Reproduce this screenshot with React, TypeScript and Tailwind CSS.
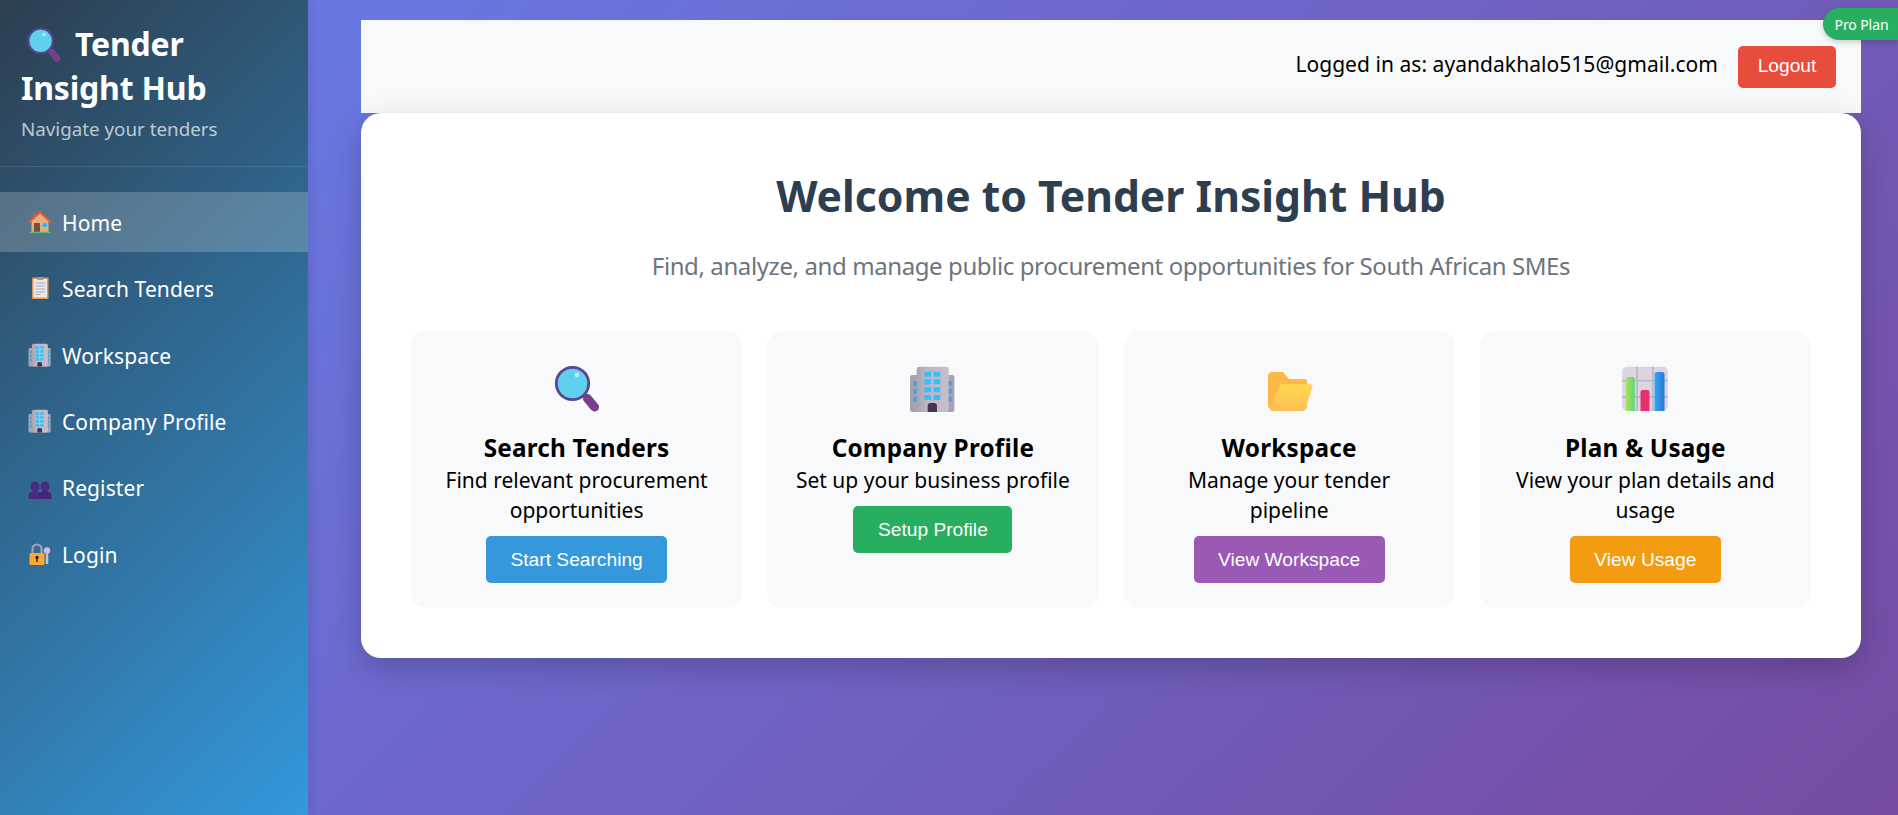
import type { ReactNode } from "react";

const ui = "font-['Noto_Sans',sans-serif]";

type IconProps = { size: number; className?: string };

function Glyph({ size, className, children }: IconProps & { children: ReactNode }) {
  return (
    <svg width={size} height={size} viewBox="0 0 48 48" className={className} aria-hidden="true">
      {children}
    </svg>
  );
}

function Magnifier(props: IconProps) {
  return (
    <Glyph {...props}>
      <line x1="34.5" y1="33.5" x2="41.5" y2="42" stroke="#7a3f8a" strokeWidth="9" strokeLinecap="round" />
      <circle cx="19.5" cy="18.5" r="16.2" fill="#5fd0ee" stroke="#5d4490" strokeWidth="2.8" />
      <circle cx="24" cy="10" r="2.4" fill="#b8e6f6" />
    </Glyph>
  );
}

function Building(props: IconProps) {
  const tower = [6.7, 14.3, 22.3, 30];
  const side = [16, 24, 31.6];
  return (
    <Glyph {...props}>
      <defs>
        <linearGradient id="towerFace" x1="0" y1="0" x2="1" y2="0">
          <stop offset="0" stopColor="#a9a2af" />
          <stop offset="0.3" stopColor="#bdb5c2" />
          <stop offset="1" stopColor="#c6bfcb" />
        </linearGradient>
      </defs>
      <rect x="1" y="10" width="44.4" height="37" rx="2" fill="#a8a2ae" />
      <rect x="7.7" y="1.7" width="32" height="45.3" rx="3" fill="url(#towerFace)" />
      {tower.map((y) => (
        <g key={y} fill="#36c0fb">
          <rect x="15.4" y={y} width="6.6" height="5" />
          <rect x="24.7" y={y} width="6.6" height="5" />
        </g>
      ))}
      {side.map((y) => (
        <g key={y} fill="#36a9ec">
          <rect x="4.4" y={y} width="3.3" height="5" />
          <rect x="39.7" y={y} width="3" height="5" />
        </g>
      ))}
      <path d="M18.7 47v-6a3 3 0 0 1 3-3h3.3a3 3 0 0 1 3 3v6z" fill="#433553" />
    </Glyph>
  );
}

function Folder(props: IconProps) {
  return (
    <Glyph {...props}>
      <defs>
        <linearGradient id="folderFront" x1="0" y1="0" x2="0" y2="1">
          <stop offset="0" stopColor="#ffd84f" />
          <stop offset="1" stopColor="#ffbe55" />
        </linearGradient>
      </defs>
      <path d="M3 11a4 4 0 0 1 4-4h11l6 7h16a2 2 0 0 1 2 2v26a2 2 0 0 1-2 2H7a4 4 0 0 1-4-4z" fill="#ffb845" />
      <path d="M14.500 21.500a3 3 0 0 1 3-2.200h28a2 2 0 0 1 2 2.500L40.500 43.500a3 3 0 0 1-3 2.500H7a2 2 0 0 1-2-2.500z" fill="url(#folderFront)" />
    </Glyph>
  );
}

function BarChart(props: IconProps) {
  return (
    <Glyph {...props}>
      <defs>
        <linearGradient id="barGreen" x1="0" y1="0" x2="1" y2="0">
          <stop offset="0" stopColor="#a5e35c" />
          <stop offset="1" stopColor="#5fd67c" />
        </linearGradient>
        <linearGradient id="barBlue" x1="0" y1="0" x2="1" y2="0">
          <stop offset="0" stopColor="#31a9f5" />
          <stop offset="1" stopColor="#2a75cf" />
        </linearGradient>
      </defs>
      <rect x="1.200" y="1.700" width="45.600" height="44.300" rx="5" fill="#dad5e1" />
      <path d="M16 1.700V46M31.800 1.700V46M1.200 15.700h45.600M1.200 32h45.600" stroke="#bdb8c5" strokeWidth="1.800" />
      <path d="M5 46V14.500a2.500 2.500 0 0 1 2.500-2.500h3.800a2.500 2.500 0 0 1 2.500 2.500V46z" fill="url(#barGreen)" />
      <path d="M19.500 46V27a2 2 0 0 1 2-2h5a2 2 0 0 1 2 2v19z" fill="#e8306f" />
      <path d="M33.500 46V9.500A2.500 2.500 0 0 1 36 7h5a2.500 2.500 0 0 1 2.500 2.500V46z" fill="url(#barBlue)" />
    </Glyph>
  );
}

function House(props: IconProps) {
  return (
    <Glyph {...props}>
      <rect x="10" y="2" width="5" height="12" fill="#a5684a" />
      <path d="M24 6 7 21v23h34V21z" fill="#e4ae7d" />
      <path d="M3 24 24 5l21 19" fill="none" stroke="#ef5c3a" strokeWidth="4" strokeLinejoin="round" strokeLinecap="round" />
      <rect x="12" y="26" width="12" height="18" fill="#7a4f43" />
      <rect x="29" y="26" width="9" height="8" fill="#3fb3f7" />
      <rect x="2" y="43.500" width="44" height="2.500" fill="#54c26a" />
    </Glyph>
  );
}

function Clipboard(props: IconProps) {
  return (
    <Glyph {...props}>
      <rect x="8" y="3" width="33" height="43" rx="1.500" fill="#dc9a50" />
      <rect x="11" y="6" width="27" height="37" fill="#ece7ef" />
      <rect x="18" y="2" width="13" height="6" rx="1.500" fill="#9f99a6" />
      <path d="M15 14h19M15 20h19M15 26h19M15 32h19M15 37h10" stroke="#a7a1ae" strokeWidth="1.800" />
    </Glyph>
  );
}

function People(props: IconProps) {
  return (
    <Glyph {...props}>
      <g fill="#4b2a84">
        <ellipse cx="14" cy="21" rx="9" ry="10" />
        <path d="M1 46v-6c0-6 6-10 13-10s13 4 13 10v6z" />
        <ellipse cx="34" cy="21" rx="9" ry="10" />
        <path d="M21 46v-6c0-6 6-10 13-10s13 4 13 10v6z" fill="#452578" />
      </g>
    </Glyph>
  );
}

function LockKey(props: IconProps) {
  return (
    <Glyph {...props}>
      <path d="M9 24V14a9 9 0 0 1 18 0v10" fill="none" stroke="#aaa3b8" strokeWidth="4" />
      <circle cx="38" cy="17" r="6.500" fill="#c9bedb" />
      <rect x="35.500" y="20" width="5" height="24" rx="1" fill="#c9bedb" />
      <rect x="3" y="22" width="30" height="24" rx="3" fill="#fbaa2c" />
      <circle cx="18" cy="31" r="3.500" fill="#36243f" />
      <rect x="16.500" y="32" width="3" height="8" fill="#36243f" />
    </Glyph>
  );
}

const navItems = [
  { label: "Home", Icon: House, active: true },
  { label: "Search Tenders", Icon: Clipboard },
  { label: "Workspace", Icon: Building },
  { label: "Company Profile", Icon: Building },
  { label: "Register", Icon: People },
  { label: "Login", Icon: LockKey },
];

const cards = [
  { title: "Search Tenders", text: "Find relevant procurement opportunities", action: "Start Searching", color: "bg-[#3498db]", Icon: Magnifier },
  { title: "Company Profile", text: "Set up your business profile", action: "Setup Profile", color: "bg-[#27ae60]", Icon: Building },
  { title: "Workspace", text: "Manage your tender pipeline", action: "View Workspace", color: "bg-[#9b59b6]", Icon: Folder },
  { title: "Plan & Usage", text: "View your plan details and usage", action: "View Usage", color: "bg-[#f39c12]", Icon: BarChart },
];

function Sidebar() {
  return (
    <aside className="w-[308px] shrink-0 bg-linear-[135deg,#2c3e50,#3498db] shadow-[2px_0_10px_rgba(0,0,0,0.1)] text-white">
      <div className="border-b border-white/10 px-[21px] pt-[22px] pb-[24px]">
        <h1 className="text-[32px] leading-[44px] font-bold tracking-[-0.2px]">
          <Magnifier size={36} className="ml-[5px] mr-[13px] inline-block align-[-7px]" />
          Tender Insight Hub
        </h1>
        <p className="mt-[6px] text-[18.800px] leading-[26px] text-white/70">Navigate your tenders</p>
      </div>
      <nav className="flex flex-col gap-[6.400px] pt-[25px]">
        {navItems.map(({ label, Icon, active }) => (
          <a
            key={label}
            href="#"
            className={`flex h-[60px] items-center gap-[10px] pl-[28px] text-[21px] tracking-[0.1px] ${active ? "bg-white/20" : ""}`}
          >
            <Icon size={24} />
            <span className="pt-[3px]">{label}</span>
          </a>
        ))}
      </nav>
    </aside>
  );
}

function TopBar() {
  return (
    <header className="flex h-[93px] items-center justify-end gap-[20px] bg-[#f8f9fa] pr-[25px] text-black">
      <span className="mb-[3px] text-[21px] tracking-[0.05px]">Logged in as: ayandakhalo515@gmail.com</span>
      <button className="h-[42px] w-[98px] rounded-[5px] bg-[#e74c3c] font-['Liberation_Sans',sans-serif] text-[19.200px] text-white">
        Logout
      </button>
    </header>
  );
}

function FeatureCard({ title, text, action, color, Icon }: (typeof cards)[number]) {
  return (
    <div className="flex flex-col items-center rounded-[15px] bg-[#f8f9fa] p-[25px] text-center text-black">
      <div className="h-[75px] pt-[9px]">
        <Icon size={48} />
      </div>
      <h3 className="text-[24.300px] leading-[34px] font-bold tracking-[0.2px]">{title}</h3>
      <p className="text-[21px] leading-[30px]">{text}</p>
      <button className={`mt-[11px] h-[47px] rounded-[5px] px-[24.500px] pt-[1px] font-['Liberation_Sans',sans-serif] text-[19.200px] text-white ${color}`}>
        {action}
      </button>
    </div>
  );
}

export default function App() {
  return (
    <div className={`relative flex h-screen overflow-hidden bg-linear-[135deg,#667eea,#764ba2] ${ui}`}>
      <Sidebar />
      <main className="flex-1 pt-[20px] pr-[37px] pl-[53px]">
        <TopBar />
        <section className="relative rounded-[20px] bg-white p-[50px] shadow-[0_10px_30px_rgba(0,0,0,0.2)]">
          <h2 className="text-center text-[42.700px] leading-[66px] font-bold text-[#2c3e50]">
            Welcome to Tender Insight Hub
          </h2>
          <p className="mt-[20px] mb-[49px] text-center text-[24px] leading-[33px] tracking-[-0.4px] text-[#6c757d]">
            Find, analyze, and manage public procurement opportunities for South African SMEs
          </p>
          <div className="grid grid-cols-4 gap-[25px]">
            {cards.map((card) => (
              <FeatureCard key={card.title} {...card} />
            ))}
          </div>
        </section>
      </main>
      <div className="absolute top-[8px] right-0 flex h-[32px] w-[75px] items-center justify-center rounded-l-[20px] bg-[#27ae60] pl-[2px] text-[14px] tracking-[-0.1px] text-white shadow-[0_2px_6px_rgba(0,0,0,0.2)]">
        Pro Plan
      </div>
    </div>
  );
}
